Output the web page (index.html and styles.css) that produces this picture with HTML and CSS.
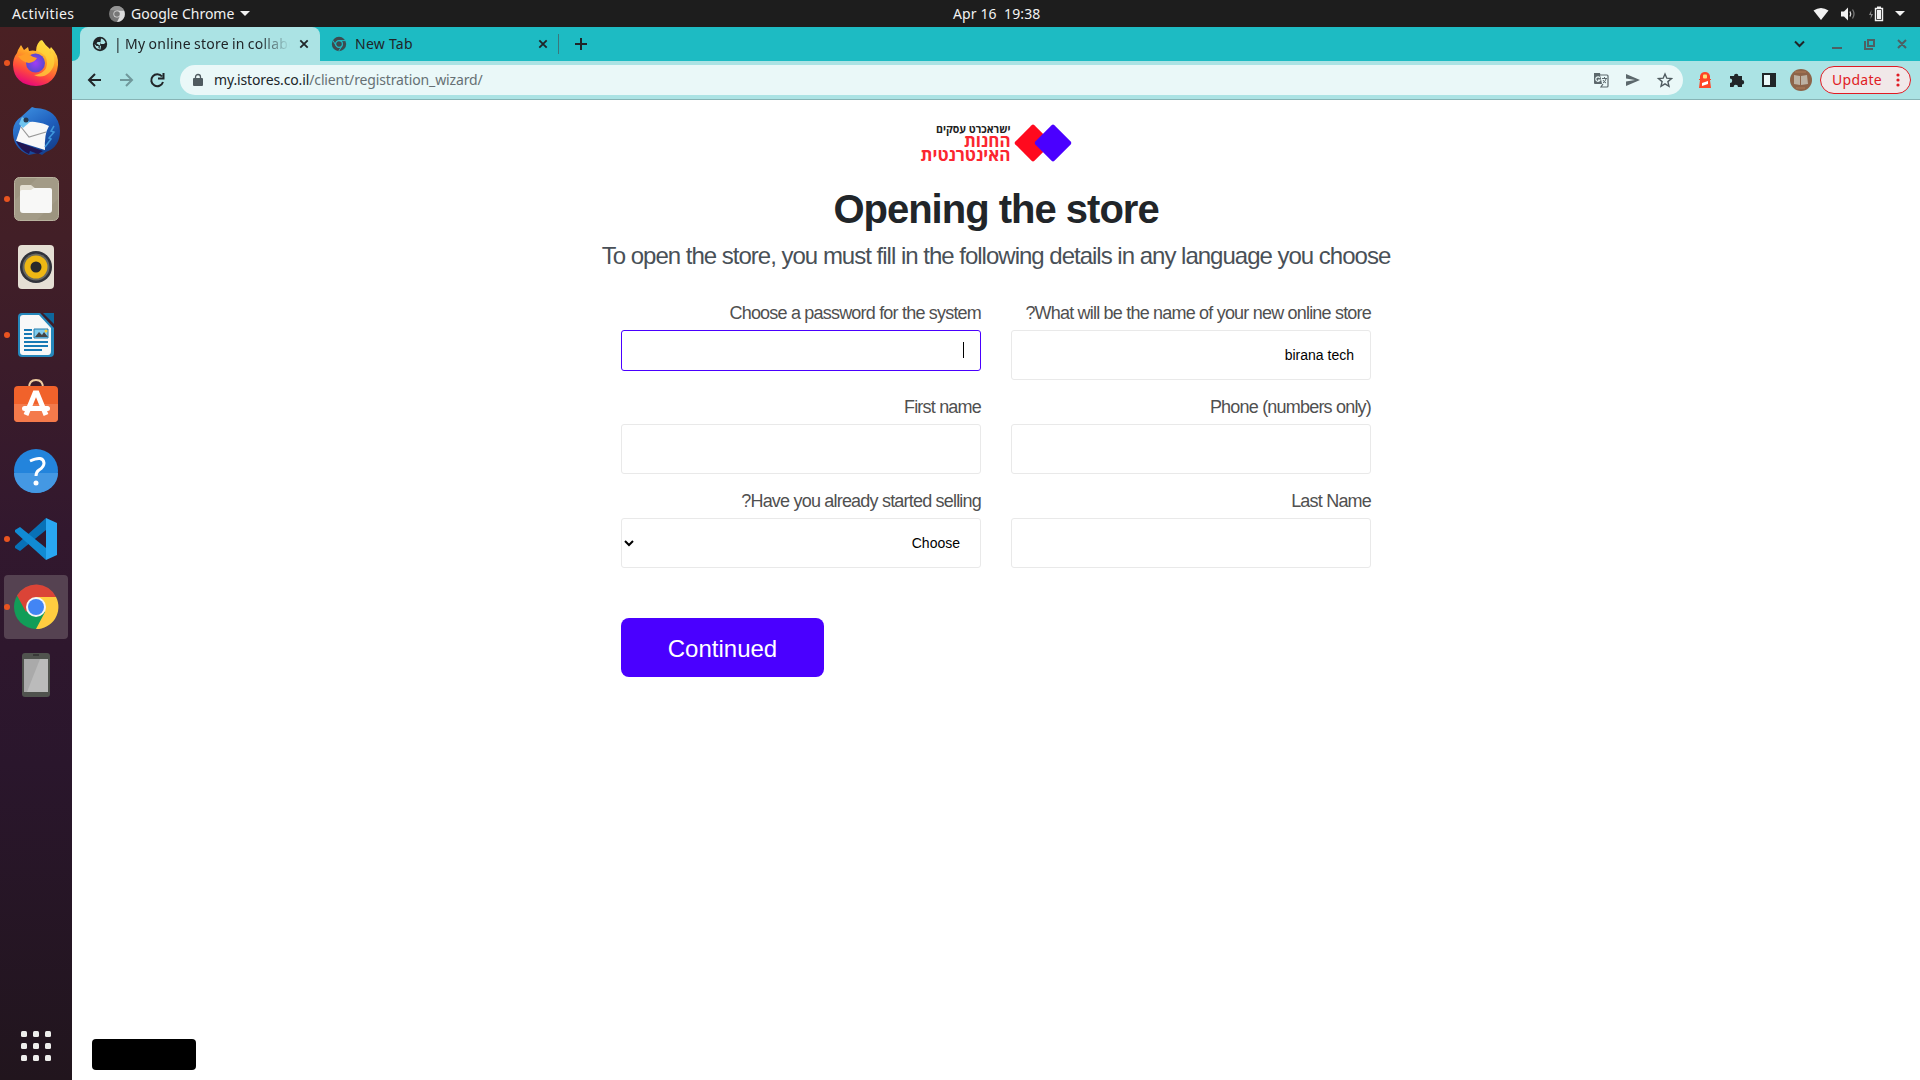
FILE: index.html
```html
<!DOCTYPE html>
<html lang="en">
<head>
<meta charset="utf-8">
<title>My online store</title>
<link rel="stylesheet" href="styles.css">
</head>
<body>
<header class="topbar">
  <div class="top-left">
    <span class="activities">Activities</span>
    <svg class="top-chrome" width="16" height="16" viewBox="0 0 16 16"><circle cx="8" cy="8" r="8" fill="#777"/><path d="M8 4.500h7A8 8 0 0 1 8 16l3-6z" fill="#ddd"/><path d="M1 4a8 8 0 0 1 14 0.500H8z" fill="#949494"/><circle cx="8" cy="8" r="3.600" fill="#ddd"/><circle cx="8" cy="8" r="2.800" fill="#777"/></svg>
    <span class="appname">Google Chrome</span>
    <i class="caret"></i>
  </div>
  <span class="clock">Apr 16&nbsp; 19:38</span>
  <div class="top-right">
    <svg width="16" height="14" viewBox="0 0 16 14"><path d="M.5 3.500Q8-1.500 15.500 3.500L8 13z" fill="#f2f2f2"/></svg>
    <svg width="16" height="14" viewBox="0 0 16 14"><path d="M1 4.500h3L8 .5v13L4 9.500H1z" fill="#f2f2f2"/><path d="M10 4.500q1.500 2.500 0 5" stroke="#ddd" fill="none" stroke-width="1.300"/><path d="M12.500 2.500q3 4.500 0 9" stroke="#777" fill="none" stroke-width="1.300"/></svg>
    <svg width="16" height="16" viewBox="0 0 16 16"><path d="M3.500 4 1 9h2l-.5 4L5 8H3z" fill="#888"/><path d="M7.500 2.500h7v12h-7z" fill="none" stroke="#f2f2f2" stroke-width="1.400"/><path d="M9 4h4v9H9zM9 .5h4v2H9z" fill="#f2f2f2"/></svg>
    <i class="caret"></i>
  </div>
</header>
<div class="desktop">
  <nav class="dock">
    <div class="app running"><svg viewBox="0 0 48 48"><defs><linearGradient id="ff" x1=".7" y1="0" x2=".3" y2="1"><stop offset="0" stop-color="#fff44f"/><stop offset=".4" stop-color="#ff9a26"/><stop offset=".7" stop-color="#ff4a3d"/><stop offset="1" stop-color="#e40080"/></linearGradient><radialGradient id="fp"><stop offset="0" stop-color="#a03df5"/><stop offset="1" stop-color="#5a48cf"/></radialGradient></defs><path d="M6 11l3-5 3 5 4-3 1 4q4-1 7 0 0-8 6-11 3 5 8 9l1-2q8 8 7 18-2 20-22 21Q2 46 1 26q0-7 4-12z" fill="url(#ff)"/><path d="M29 1q4 7 8 9l1 5 2-2q6 12-3 21-7 6-15 2 13-2 13-12 0-9-10-12 0-8 4-11z" fill="#ffd53a" opacity=".75"/><circle cx="23.500" cy="24" r="9.500" fill="url(#fp)"/><path d="M15 13q-4 4-9 4 4 6 11 7 6-1 8-5-5-1-7-3-2 1-3-3z" fill="#ff9d27"/></svg></div>
    <div class="app"><svg viewBox="0 0 48 48"><defs><linearGradient id="tb" x1=".2" y1="0" x2=".8" y2="1"><stop offset="0" stop-color="#3c8fe0"/><stop offset=".5" stop-color="#1f5fbd"/><stop offset="1" stop-color="#123b87"/></linearGradient></defs><path d="M9 10 20 0l3 1q24 1 25 23 0 16-14 21l-4 3-4-2-9 2Q0 41 1 23q1-9 8-13z" fill="url(#tb)"/><path d="M9 19q6-5 14-4 9 1 14 4-5 8-4 24L4 34z" fill="#f8f8f8"/><path d="M9 20l8 10 17-5" fill="none" stroke="#999" stroke-width="1.200"/><path d="M4 34l27 10-5 3-8-3-1 3Q8 43 4 34z" fill="#211551"/><path d="M10 10l8 5-7 6-4-4z" fill="#6fc4ef"/><circle cx="14" cy="13" r="2.500" fill="#263a50"/><path d="M42 19l-3 5 3 1-5 6 2 1-6 8" fill="none" stroke="#3f97dc" stroke-width="1.500"/></svg></div>
    <div class="app running"><svg viewBox="0 0 48 48"><rect x="2.500" y="2.500" width="44" height="43" rx="5" fill="#9d9580" stroke="#b9b39f"/><path d="M3 25 25 3h18q3 0 3 3v18L25 45H6q-3 0-3-3z" fill="#aaa28e" opacity=".5"/><path d="M8 19v-7q0-2 2-2h9l5 4v6z" fill="#e3dfd2"/><path d="M8 17q0-2 2-2h9l3-2h16q2 0 2 2v20q0 3-3 3H11q-3 0-3-3z" fill="#f8f8f7"/></svg></div>
    <div class="app"><svg viewBox="0 0 48 48"><rect x="6" y="2" width="36" height="44" rx="4" fill="#e5dfd4"/><circle cx="24" cy="24" r="16" fill="#30323a"/><circle cx="24" cy="24" r="13.500" fill="#6a6a61"/><circle cx="24" cy="24" r="11.500" fill="#efb814"/><circle cx="24" cy="24" r="5.500" fill="#292a2b"/></svg></div>
    <div class="app running"><svg viewBox="0 0 48 48"><path d="M10 2h18l14 15v25q0 4-4 4H10q-4 0-4-4V6q0-4 4-4z" fill="#2587bb"/><path d="M11 4h16L39 17v23q0 4-3 4H11q-3 0-3-3V7q0-3 3-3z" fill="#f8f8f8"/><path d="M31 2h11v11z" fill="#0e679c"/><path d="M12 19h8M12 23h8M12 27h8M12 31h24M12 35h24M12 39h18" stroke="#1779b5" stroke-width="1.800"/><path d="M22 18h14v9H22z" fill="#81ccef" stroke="#247fae"/><path d="M23 26l4-5 3 3 2-3 4 5z" fill="#454545"/><circle cx="34" cy="20" r="1.500" fill="#fc3"/></svg></div>
    <div class="app"><svg viewBox="0 0 48 48"><path d="M17 9q0-8 7-8t7 8" fill="none" stroke="#efcda0" stroke-width="2"/><rect x="2" y="7" width="44" height="36" rx="4" fill="#f1622b"/><path d="M2 25h44v14q0 4-4 4H6q-4 0-4-4z" fill="#f47a4b"/><path d="M14 36 23 14h2l9 22" fill="none" stroke="#fff" stroke-width="5"/><rect x="10" y="27" width="28" height="5" rx="2.500" fill="#fff"/></svg></div>
    <div class="app"><svg viewBox="0 0 48 48"><circle cx="24" cy="24" r="22" fill="#2384dc"/><path d="M2 26h44a22 20 0 0 1-44 0" fill="#4498e3"/><path d="M18 14q13-6 14 2 0 4-5 7-3 2-3 6" fill="none" stroke="#fff" stroke-width="3"/><circle cx="24" cy="36" r="2.500" fill="#fff"/></svg></div>
    <div class="app running"><svg viewBox="0 0 48 48"><path d="M3 31 34 3v12L8 36l-5-3z" fill="#0871b7"/><path d="M3 15l5-3 26 21v12L3 17z" fill="#118bd4"/><path d="M34 3l11 5v32l-11 5z" fill="#29a7f2"/></svg></div>
    <div class="app running active"><svg viewBox="0 0 48 48"><circle cx="24" cy="24" r="22" fill="#119d58"/><path d="M24 14h20A22 22 0 0 1 24 46l9-17z" fill="#ffcd40"/><path d="M5 12.500A22 22 0 0 1 44 14H24L14 29z" fill="#db4437"/><circle cx="24" cy="24" r="10" fill="#f5f5f5"/><circle cx="24" cy="24" r="8" fill="#4285f4"/></svg></div>
    <div class="app"><svg viewBox="0 0 48 48"><rect x="10" y="2" width="28" height="44" rx="3" fill="#50534e"/><path d="M12 8h24v33H12z" fill="#aaa"/><path d="M28 8h8v33H15z" fill="#bbb"/><path d="M21 4h6" stroke="#222"/></svg></div>
    <svg class="grid" width="30" height="30" viewBox="0 0 30 30" fill="#eeeeec"><rect width="6" height="6" rx="1.500"/><rect x="12" width="6" height="6" rx="1.500"/><rect x="24" width="6" height="6" rx="1.500"/><rect y="12" width="6" height="6" rx="1.500"/><rect x="12" y="12" width="6" height="6" rx="1.500"/><rect x="24" y="12" width="6" height="6" rx="1.500"/><rect y="24" width="6" height="6" rx="1.500"/><rect x="12" y="24" width="6" height="6" rx="1.500"/><rect x="24" y="24" width="6" height="6" rx="1.500"/></svg>
  </nav>
  <div class="browser">
    <div class="tabs">
      <div class="corner"></div>
      <div class="tab current">
        <svg width="16" height="16" viewBox="0 0 16 16"><circle cx="8" cy="8" r="7.200" fill="#202528"/><path d="M9 2.500q3 .5 4.500 4L12 8H9L8 6H5.500L4.500 7.500 7 9l2 1-.5 3.500Q3 13 2.500 8l2 2h2v2l1 1M7 4l3-1" fill="#abe3e4"/></svg>
        <span class="tab-title fade">| My online store in collabo</span>
        <svg class="x" width="10" height="10" viewBox="0 0 10 10"><path d="M1.300 1.300l7.400 7.400m0-7.400L1.300 8.700"/></svg>
      </div>
      <div class="tab other">
        <svg width="16" height="16" viewBox="0 0 16 16"><circle cx="8" cy="8" r="7.200" fill="#3d4b50"/><circle cx="8" cy="8" r="3.400" fill="none" stroke="#1dbbc3" stroke-width="1.200"/><path d="M8 4.600h6.500M5 9.700 2 4.500M11 9.700 7.800 15" stroke="#1dbbc3"/></svg>
        <span class="tab-title">New Tab</span>
        <svg class="x" width="10" height="10" viewBox="0 0 10 10"><path d="M1.300 1.300l7.400 7.400m0-7.400L1.300 8.700"/></svg>
      </div>
      <svg class="plus" width="12" height="12" viewBox="0 0 12 12"><path d="M6 0v12M0 6h12" stroke="#202528" stroke-width="2"/></svg>
      <svg class="winctl" width="116" height="20" viewBox="0 0 116 20" fill="none"><path d="M3 7.500l4.500 4.500L12 7.500" stroke="#202528" stroke-width="2"/><g stroke="#4d6063" stroke-width="2"><path d="M40 14h10M76 6h6v6h-6zM73 7v8h8M106 6l8 8m0-8-8 8"/></g></svg>
    </div>
    <div class="toolbar">
      <svg class="navs" width="78" height="16" viewBox="0 0 78 16" fill="none" stroke-width="2"><path d="M14 8H2.500M8 2 2 8l6 6" stroke="#202528"/><path d="M33 8h11.500M39 2l6 6-6 6" stroke="#70989b"/><path d="M75 4.500A6 6 0 1 0 76 10M76.500 1v5.500H71" stroke="#202528"/></svg>
      <div class="urlbar">
        <svg width="10" height="14" viewBox="0 0 10 14"><path d="M1 5h8q1 0 1 1v6q0 1-1 1H1q-1 0-1-1V6q0-1 1-1z" fill="#4f5b60"/><path d="M2.500 5.500V4a2.500 2.500 0 0 1 5 0v1.500" fill="none" stroke="#4f5b60" stroke-width="1.300"/></svg>
        <span class="url"><b>my.istores.co.il</b>/client/registration_wizard/</span>
        <svg class="url-icons" width="80" height="16" viewBox="0 0 80 16"><path d="M1 1h6l2 11H2q-1 0-1-1z" fill="#5c686c"/><path d="M7 3h7q1 0 1 1v10q0 1-1 1H8l2-3" fill="#eaf8f8" stroke="#5c686c" stroke-width="1.200"/><path d="M6.800 5.800A2.200 2.200 0 1 0 7 8H5" stroke="#eaf8f8" stroke-width="1.200" fill="none"/><path d="M9 6.500h5M11.500 5v1.500M13 7q-1 3-3 4m0-3q1 2 3 3" stroke="#5c686c" fill="none"/><path d="M33 2l14 6-14 6V9.500L42 8l-9-1.500z" fill="#5c686c"/><path d="M72 2l1.800 4.200 4.700.4-3.600 3 1.100 4.700-4-2.500-4 2.500 1.100-4.700-3.600-3 4.700-.4z" fill="none" stroke="#4f5b60" stroke-width="1.400"/></svg>
      </div>
      <svg class="ext" width="80" height="18" viewBox="0 0 80 18"><path d="M3 5Q4 1 8 1t5 4v3h1v1h-1l1 8H2l1-8H2V8h1z" fill="#ff4426"/><rect x="6" y="3.500" width="4" height="4" rx="1" fill="#ffe27a"/><path d="M5 12l6-2v3l-6 2z" fill="#fff"/><path d="M34 5h3a2.200 2.200 0 0 1 4.400 0H45v4a2.200 2.200 0 0 1 0 4.400V16h-4a2.200 2.200 0 0 0-4.400 0H33v-4a2.200 2.200 0 0 0 0-4.400V5z" fill="#202528"/><path d="M66 3h12v12H66z" fill="#eaf8f8" stroke="#202528" stroke-width="2"/><path d="M73 3h5v12h-5z" fill="#202528"/></svg>
      <svg class="avatar" width="22" height="22" viewBox="0 0 22 22"><circle cx="11" cy="11" r="11" fill="#8d6449"/><path d="M4 6l6 1v9l-6-1zM11 7l6-1 1 9-7 1z" fill="#bcb1a2"/><path d="M5 3h11M6 19h9" stroke="#a47453" stroke-width="1.500"/></svg>
      <div class="update"><span>Update</span><svg width="4" height="14" viewBox="0 0 4 14" fill="#e01b24"><circle cx="2" cy="2" r="1.600"/><circle cx="2" cy="7" r="1.600"/><circle cx="2" cy="12" r="1.600"/></svg></div>
    </div>
    <main class="page">
      <svg class="logo" width="150" height="38" viewBox="921 124 150 38"><g font-family="Open Sans, Liberation Sans, sans-serif" font-weight="700" direction="rtl"><text x="1010.500" y="132.800" font-size="11.500" textLength="74.500" lengthAdjust="spacingAndGlyphs" fill="#222">ישראכרט עסקים</text><text x="1010.500" y="146.500" font-size="17.500" textLength="46.500" lengthAdjust="spacingAndGlyphs" fill="#fb2630">החנות</text><text x="1010.500" y="160.500" font-size="17.500" textLength="90" lengthAdjust="spacingAndGlyphs" fill="#fb2630">האינטרנטית</text></g><rect x="1019.500" y="129.500" width="27" height="27" rx="2" fill="#ff0a1e" transform="rotate(45 1033 143)"/><rect x="1039.500" y="129.500" width="27" height="27" rx="2" fill="#4a00ff" transform="rotate(45 1053 143)"/></svg>
      <h1>Opening the store</h1>
      <p class="lead">To open the store, you must fill in the following details in any language you choose</p>
      <form class="form" dir="rtl">
        <div class="field"><label>What will be the name of your new online store?</label><div class="box">birana tech</div></div>
        <div class="field"><label>Choose a password for the system</label><div class="box focus"><i class="cursor"></i></div></div>
        <div class="field"><label dir="ltr">Phone (numbers only)</label><div class="box"></div></div>
        <div class="field"><label>First name</label><div class="box"></div></div>
        <div class="field"><label>Last Name</label><div class="box"></div></div>
        <div class="field"><label>Have you already started selling?</label><div class="box select"><span>Choose</span><svg width="10" height="7" viewBox="0 0 10 7"><path d="M1 1l4 4 4-4" fill="none" stroke="#000" stroke-width="2"/></svg></div></div>
      </form>
      <div class="actions"><button type="button" class="continue">Continued</button></div>
      <div class="status"></div>
    </main>
  </div>
</div>
</body>
</html>
```
FILE: styles.css
```css
* { box-sizing: border-box; }
body { margin: 0; width: 1920px; height: 1080px; overflow: hidden; display: flex; flex-direction: column; background: #fff; font-family: "Noto Sans", sans-serif; font-size: 14px; }
svg { display: block; flex: none; }
.topbar { height: 27px; flex: none; background: #1d1d1d; color: #f2f2f2; display: grid; grid-template-columns: 953px 1fr auto; align-items: center; line-height: 25px; }
.topbar > span, .top-left > span { padding-bottom: 1px; }
.top-left { display: flex; align-items: center; padding-left: 12px; }
.activities { width: 97px; letter-spacing: .4px; }
.top-chrome { margin-right: 6px; }
.appname { width: 109px; }
.clock { letter-spacing: .1px; }
.caret { border: 5px solid transparent; border-top-color: #f2f2f2; border-bottom: 0; }
.top-right { display: flex; align-items: center; gap: 11.5px; padding-right: 15px; }
.desktop { flex: 1; display: flex; min-height: 0; }
.dock { width: 72px; flex: none; background: linear-gradient(#4a2023, #421f27 20%, #32182e 48%, #2a162c 70%, #21151d); display: flex; flex-direction: column; align-items: center; gap: 4px; padding: 4px 0 19px; }
.app { width: 64px; height: 64px; flex: none; display: grid; place-items: center; position: relative; border-radius: 4px; }
.app > svg { width: 48px; height: 48px; }
.app.running::before { content: ""; position: absolute; left: 0; top: 29px; width: 6px; height: 6px; border-radius: 50%; background: #e95420; }
.app.active { background: #554251; }
.grid { margin-top: auto; }
.browser { flex: 1; display: flex; flex-direction: column; min-width: 0; }
.tabs { height: 34px; flex: none; background: #1dbbc3; display: flex; align-items: center; color: #202528; }
.corner { width: 8px; height: 34px; background: #abe3e4; }
.corner::after { content: ""; display: block; height: 34px; background: #1dbbc3; border-bottom-right-radius: 8px; }
.tab { height: 34px; display: flex; align-items: center; }
.current { width: 240px; padding: 0 11px 0 12px; border-radius: 8px 8px 0 0; background: #abe3e4; }
.tab-title { flex: 1; margin-left: 9px; padding-bottom: 2px; white-space: nowrap; overflow: hidden; letter-spacing: .25px; }
.fade { max-width: 176px; margin-left: 6px; letter-spacing: .23px; word-spacing: -.7px; -webkit-mask-image: linear-gradient(90deg, #000 82%, transparent); mask-image: linear-gradient(90deg, #000 82%, transparent); }
.current .x { margin-left: auto; }
.x { stroke: #202528; stroke-width: 1.8; }
.other { height: 20px; width: 239px; padding: 0 10px 0 11px; border-right: 1px solid #3b777c; }
.other .tab-title { margin-left: 8px; }
.plus { margin-left: 16px; }
.winctl { margin-left: auto; margin-right: 12px; }
.toolbar { height: 39px; flex: none; background: #abe3e4; border-bottom: 1px solid #87b4b5; display: flex; align-items: center; padding: 0 9px 0 15px; }
.navs { margin-right: 15px; }
.urlbar { width: 1503px; height: 30px; border-radius: 15px; background: #eaf8f8; display: flex; align-items: center; padding: 0 10px 0 13px; }
.url { margin-left: 11px; padding-bottom: 2px; color: #667074; letter-spacing: -.13px; }
.url b { font-weight: 400; color: #202528; }
.url-icons { margin-left: auto; }
.ext { margin-left: 14px; }
.avatar { margin: 0 8px 0 13px; }
.update { width: 91px; height: 28px; border: 1px solid #e01b24; border-radius: 14px; background: #f1e8e9; color: #e01b24; display: flex; align-items: center; justify-content: space-between; padding: 0 10px 0 11px; }
.update span { padding-bottom: 1px; letter-spacing: .3px; }
.page { flex: 1; display: flex; flex-direction: column; align-items: center; padding: 24px 11px 0; font-family: "Liberation Sans", sans-serif; }
.logo { overflow: visible; }
h1 { margin: 24px 0 0; font-size: 40px; line-height: 46px; letter-spacing: -1px; color: #212529; }
.lead { margin: 10px 0 0; font-size: 24px; line-height: 28px; letter-spacing: -1px; color: #495057; white-space: nowrap; }
.form { width: 750px; margin-top: 33px; display: grid; grid-template-columns: 360px 360px; column-gap: 30px; grid-auto-rows: 94px; }
.field { display: flex; flex-direction: column; }
label { display: block; height: 27px; line-height: 20px; font-size: 18px; letter-spacing: -.8px; color: #505050; text-align: right; white-space: nowrap; }
.box { height: 50px; border: 1px solid #e9e9e9; border-radius: 3px; padding: 0 16px; font-size: 14px; line-height: 48px; color: #000; }
.focus { height: 41px; border-color: #4a00ff; padding-top: 11px; }
.cursor { display: block; width: 1px; height: 16px; background: #000; }
.select { display: flex; align-items: center; justify-content: space-between; padding: 0 20px 0 2px; }
.actions { width: 750px; margin-top: 33px; }
.continue { display: block; width: 203px; height: 59px; border: 0; border-radius: 8px; background: #4a00ff; color: #fff; font: 24px "Liberation Sans", sans-serif; padding: 2px 0 0; }
.status { width: 104px; height: 31px; border-radius: 4px; background: #000; margin: auto auto 10px 9px; }
```
